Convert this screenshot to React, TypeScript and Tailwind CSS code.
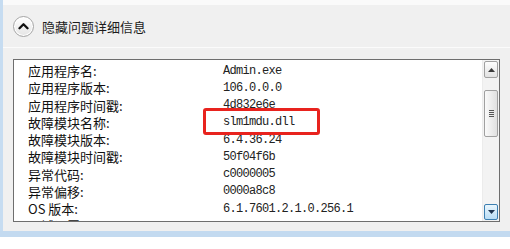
import React from "react";

const rows: [string, string][] = [
  ["应用程序名:", "Admin.exe"],
  ["应用程序版本:", "106.0.0.0"],
  ["应用程序时间戳:", "4d832e6e"],
  ["故障模块名称:", "slm1mdu.dll"],
  ["故障模块版本:", "6.4.36.24"],
  ["故障模块时间戳:", "50f04f6b"],
  ["异常代码:", "c0000005"],
  ["异常偏移:", "0000a8c8"],
  ["OS 版本:", "6.1.7601.2.1.0.256.1"],
  ["区域设置 ID:", ""],
];

const cjk = { fontFamily: '"Noto Sans CJK SC", "Noto Sans", sans-serif' };
const mono = { fontFamily: '"Liberation Mono", "DejaVu Sans Mono", monospace' };

export default function App() {
  return (
    <div className="relative w-[510px] h-[249px] bg-white overflow-hidden flex flex-col">
      <div className="flex h-[231px]">
        <div className="w-[3px] bg-[#c6dcf1]" />
        <div className="flex-1 flex flex-col bg-[#f0f0f0]">
          <div className="h-[5px] bg-[#fafafa]" />
          <div className="h-[42px] flex items-center">
            <div className="ml-[10px] w-[21px] h-[21px] rounded-full border border-[#a6a6a6] bg-gradient-to-b from-[#ffffff] to-[#e4e4e4] flex items-center justify-center shadow-[inset_0_0_0_1px_#ffffff]">
              <svg width="11" height="8" viewBox="0 0 11 8">
                <path d="M1.5 6.2 L5.5 2.2 L9.5 6.2" fill="none" stroke="#111" strokeWidth="2.3" strokeLinecap="round" strokeLinejoin="round" />
              </svg>
            </div>
            <span className="ml-[8px] text-[13px] leading-none text-[#1c1c1c]" style={cjk}>
              隐藏问题详细信息
            </span>
          </div>
          <div className="h-[1px] bg-[#fbfbfb]" />
          <div className="pt-[11px] pl-[10px]">
            <div className="w-[487px] h-[163px] border border-[#6e6e6e] bg-white flex overflow-hidden">
              <div className="flex-1 pt-[2px] pl-[14px] overflow-hidden">
                {rows.map(([k, v]) => (
                  <div key={k} className="flex h-[17.25px] items-center">
                    <div className="w-[195px] text-[13px] leading-none text-[#111]" style={cjk}>
                      {k}
                    </div>
                    <div className="text-[12px] tracking-[-0.7px] leading-none text-[#222]" style={mono}>
                      {v}
                    </div>
                  </div>
                ))}
              </div>
              <div className="w-[17px] bg-[#f3f3f3] border-l border-[#ececec] flex flex-col p-[1px]">
                <div className="h-[17px] rounded-[2px] border border-[#a0a0a0] bg-gradient-to-b from-[#fdfdfd] to-[#e2e2e2] flex items-center justify-center">
                  <svg width="7" height="4" viewBox="0 0 7 4">
                    <path d="M0 4 L3.5 0 L7 4 Z" fill="#3a3a3a" />
                  </svg>
                </div>
                <div className="h-[12px]" />
                <div className="h-[47px] rounded-[2px] border border-[#a0a0a0] bg-gradient-to-r from-[#fafafa] to-[#e0e0e0] flex flex-col items-center justify-center gap-[1px]">
                  <div className="w-[5px] h-[1px] bg-[#555]" />
                  <div className="w-[5px] h-[1px] bg-[#555]" />
                  <div className="w-[5px] h-[1px] bg-[#555]" />
                  <div className="w-[5px] h-[1px] bg-[#555]" />
                </div>
                <div className="flex-1" />
                <div className="h-[16px] rounded-[2px] border border-[#3c7fb1] bg-gradient-to-b from-[#eaf6fd] to-[#b9ddf5] flex items-center justify-center">
                  <svg width="7" height="4" viewBox="0 0 7 4">
                    <path d="M0 0 L7 0 L3.5 4 Z" fill="#1f3550" />
                  </svg>
                </div>
              </div>
            </div>
          </div>
        </div>
      </div>
      <div className="h-[6px] bg-[#c3daf0]" />
      <div className="flex-1 bg-white" />
      <div className="absolute left-[203px] top-[108px] w-[117px] h-[27px] border-[3px] border-[#e8231e] rounded-[3px]" />
    </div>
  );
}
